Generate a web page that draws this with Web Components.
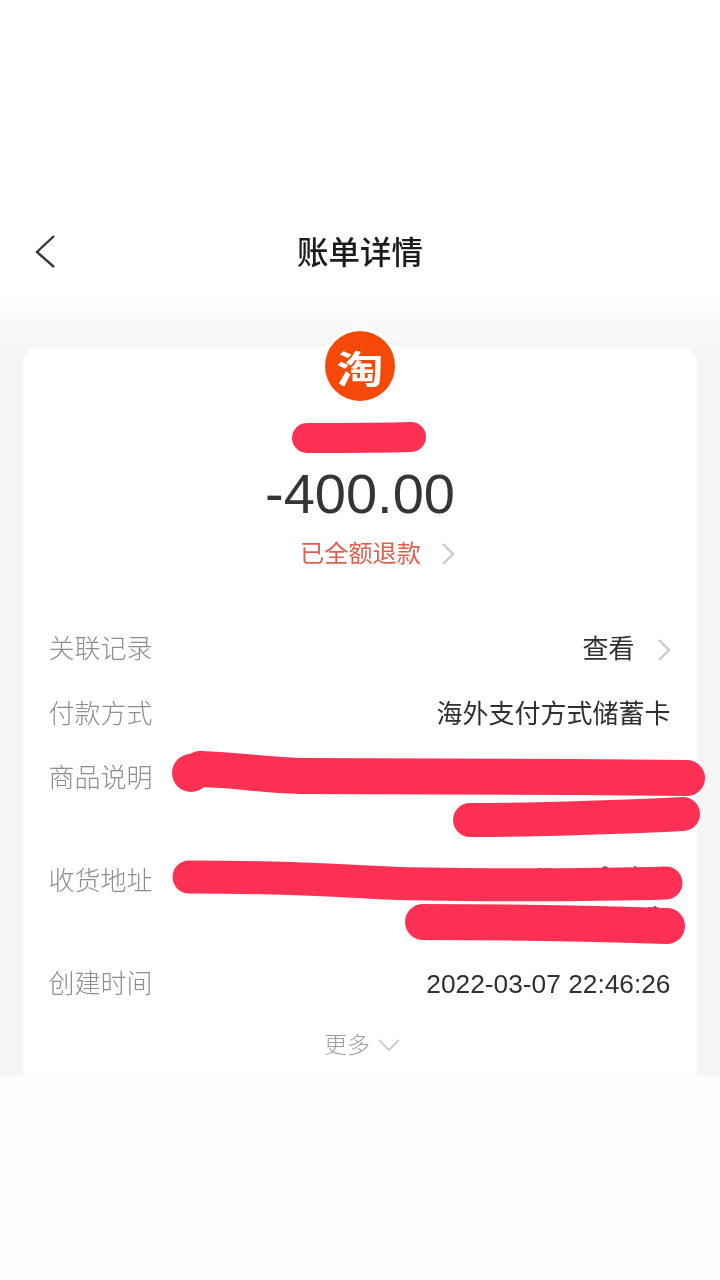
<!DOCTYPE html>
<html lang="zh">
<head>
<meta charset="utf-8">
<style>
    html, body { margin: 0; padding: 0; background: #fff; }
    body { font-family: "Liberation Sans", "Noto Sans CJK SC", sans-serif; }
</style>
</head>
<body>
<bill-page>
    <nav-bar title="账单详情"></nav-bar>
    <bill-card>
        <shop-logo></shop-logo>
        <bill-amount value="-400.00" status="已全额退款"></bill-amount>
        <detail-row label="关联记录" arrow>查看</detail-row>
        <detail-row label="付款方式">海外支付方式储蓄卡</detail-row>
        <detail-row label="商品说明">&nbsp;<br>&nbsp;</detail-row>
        <detail-row label="收货地址">&nbsp;<br>&nbsp;</detail-row>
        <detail-row label="创建时间"><span style="font-size: 26.3px">2022-03-07 22:46:26</span></detail-row>
        <more-toggle></more-toggle>
        <scribble-mark slot="over" w="1.6" color="#4a4a4a" d="M537 869 h5 M545 869 h7 M588 869 h7 M602 868 h6 M605 866 v4 M635 866 v5 M648 908 h10 M655 906 v3"></scribble-mark>
        <scribble-mark slot="over" w="30" d="M307 438 C340 438 380 438 411 437"></scribble-mark>
        <scribble-mark slot="over" w="36" d="M200 769 C240 770 260 775 300 776 L574 777 L687 778"></scribble-mark>
        <scribble-mark slot="over" w="38" d="M191 773 h.1"></scribble-mark>
        <scribble-mark slot="over" w="34" d="M470 820 C520 820 600 818 683 814"></scribble-mark>
        <scribble-mark slot="over" w="33" d="M189 877 C250 877 300 878 367 882 S600 885 666 883"></scribble-mark>
        <scribble-mark slot="over" w="36" d="M423 922 C500 922 600 924 667 926"></scribble-mark>
    </bill-card>
</bill-page>

<script>
class BillPage extends HTMLElement {
    connectedCallback() {
        this.attachShadow({ mode: 'open' }).innerHTML = `
        <style>
            :host { display: block; width: 720px; height: 1280px; overflow: hidden; background: #fdfdfd; }
            .top { background: linear-gradient(#fff 0, #fff 290px, #f5f5f5 350px); height: 1076px; display: flex; flex-direction: column; filter: blur(.4px); }
        </style>
        <div class="top"><slot></slot></div>
        `
    }
}
customElements.define('bill-page', BillPage)

class NavBar extends HTMLElement {
    connectedCallback() {
        this.attachShadow({ mode: 'open' }).innerHTML = `
        <style>
            :host { display: flex; position: relative; height: 347px; box-sizing: border-box; padding-top: 231px; justify-content: center; }
            .title { font-size: 31.5px; line-height: 44px; height: 44px; font-weight: 500; color: #1c1c1c; }
            svg { position: absolute; left: 30px; top: 230px; }
        </style>
        <svg width="32" height="44" viewBox="0 0 32 44" fill="none"><path d="M24 6 L7 22 L24 37" stroke="#383838" stroke-width="2.4"/></svg>
        <div class="title">${this.getAttribute('title')}</div>
        `
    }
}
customElements.define('nav-bar', NavBar)

class BillCard extends HTMLElement {
    connectedCallback() {
        this.attachShadow({ mode: 'open' }).innerHTML = `
        <style>
            :host { display: block; position: relative; margin: 0 23px; height: 729px; background: #fff; border-radius: 16px 16px 0 0; }
            .rows { display: flex; flex-direction: column; }
            .over { position: absolute; left: -23px; top: -347px; width: 720px; height: 1280px; pointer-events: none; }
        </style>
        <div class="rows"><slot></slot></div>
        <div class="over"><slot name="over"></slot></div>
        `
    }
}
customElements.define('bill-card', BillCard)

class ShopLogo extends HTMLElement {
    connectedCallback() {
        this.attachShadow({ mode: 'open' }).innerHTML = `
        <style>
            :host { display: flex; justify-content: center; margin-top: -16px; }
            .ring { width: 70px; height: 70px; border-radius: 50%; background: #f5490a; box-shadow: 0 0 0 4px #fff; color: #fff;
                display: flex; align-items: center; justify-content: center; font: 700 47px/70px "Noto Sans CJK SC", sans-serif; }
            span { display: block; transform: translateY(1px) scaleY(.8); }
        </style>
        <div class="ring"><span>淘</span></div>
        `
    }
}
customElements.define('shop-logo', ShopLogo)

// marker stroke over private data, path is in page coordinates
class ScribbleMark extends HTMLElement {
    connectedCallback() {
        let color = this.getAttribute('color') || '#fe3154'
        let w = this.getAttribute('w')
        let cap = color == '#fe3154' ? 'round' : 'butt'
        this.attachShadow({ mode: 'open' }).innerHTML = `
        <style>
            :host { display: block; position: absolute; left: 0; top: 0; }
            svg { display: block; overflow: visible; }
        </style>
        <svg width="720" height="1280" viewBox="0 0 720 1280" fill="none"><path d="${this.getAttribute('d')}" stroke="${color}" stroke-width="${w}" stroke-linecap="${cap}"/></svg>
        `
    }
}
customElements.define('scribble-mark', ScribbleMark)

class BillAmount extends HTMLElement {
    connectedCallback() {
        this.attachShadow({ mode: 'open' }).innerHTML = `
        <style>
            :host { display: flex; flex-direction: column; align-items: center; margin-top: 61px; padding-bottom: 58px; }
            .value { font-size: 56px; line-height: 64px; color: #353535; }
            .status { display: flex; align-items: center; gap: 20px; margin-top: 10px; font-size: 24.2px; line-height: 36px; color: #e0604e; padding-left: 35px; }
            svg { display: block; }
        </style>
        <div class="value">${this.getAttribute('value')}</div>
        <div class="status">
            <span>${this.getAttribute('status')}</span>
            <svg width="14" height="24" viewBox="0 0 14 24" fill="none"><path d="M2 2 L12 12 L2 22" stroke="#c9c9c9" stroke-width="2.4"/></svg>
        </div>
        `
    }
}
customElements.define('bill-amount', BillAmount)

class DetailRow extends HTMLElement {
    connectedCallback() {
        let arrow = this.hasAttribute('arrow') ? `<svg width="14" height="24" viewBox="0 0 14 24" fill="none"><path d="M2 2 L12 12 L2 22" stroke="#c9c9c9" stroke-width="2.4"/></svg>` : ''
        this.attachShadow({ mode: 'open' }).innerHTML = `
        <style>
            :host { display: flex; justify-content: space-between; align-items: flex-start; padding: 0 26.5px 25px 25.5px; font-size: 26px; line-height: 39px; }
            :host([arrow]) { padding-bottom: 26px; }
            .label { color: #8e8e8e; font-weight: 300; }
            .value { display: flex; align-items: center; gap: 22px; color: #303030; text-align: right; }
            svg { display: block; }
        </style>
        <div class="label">${this.getAttribute('label')}</div>
        <div class="value"><span><slot></slot></span>${arrow}</div>
        `
    }
}
customElements.define('detail-row', DetailRow)

class MoreToggle extends HTMLElement {
    connectedCallback() {
        this.attachShadow({ mode: 'open' }).innerHTML = `
        <style>
            :host { display: flex; justify-content: center; align-items: center; gap: 8px; padding-left: 4px; font-size: 23px; font-weight: 300; line-height: 34px; color: #a0a0a0; margin-top: -1px; }
            svg { display: block; }
        </style>
        <span>更多</span>
        <svg width="22" height="14" viewBox="0 0 22 14" fill="none"><path d="M1 2 L11 12 L21 2" stroke="#cfcfcf" stroke-width="2"/></svg>
        `
    }
}
customElements.define('more-toggle', MoreToggle)
</script>
</body>
</html>
